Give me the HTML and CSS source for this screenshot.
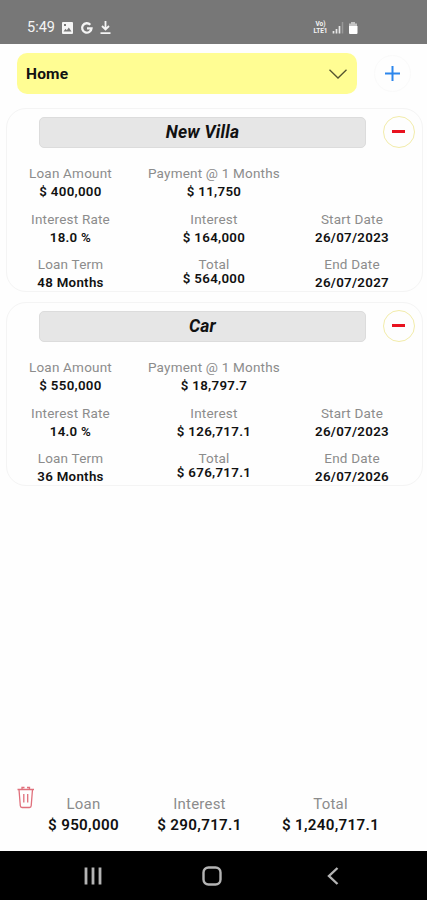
FILE: index.html
```html
<!DOCTYPE html>
<html lang="en">
  <head>
    <meta charset="UTF-8" />
    <meta name="viewport" content="width=device-width, initial-scale=1.0" />
    <title>Loans</title>
    <link rel="stylesheet" href="styles.css">
  </head>
  <body>
    <div class="status-bar">
      <span class="time">5:49</span>
      <svg class="status-left" width="52" height="14" viewBox="0 0 52 14">
        <path fill="#f4f4f4" fill-rule="evenodd" d="M2 1h9a1 1 0 0 1 1 1v10a1 1 0 0 1-1 1H2a1 1 0 0 1-1-1V2a1 1 0 0 1 1-1zM2.500 10.500h8l-2.700-4-2 2.700-1.300-1.500zM3 3v2h2V3z" />
        <path fill="none" stroke="#f4f4f4" stroke-width="2.300" d="M29.300 3.800A4.700 4.700 0 1 0 30.500 7.300H26" />
        <path fill="none" stroke="#f4f4f4" stroke-width="1.800" d="M44.500 0v8M41 5l3.500 3.500L48 5M39.500 12.200h10" />
      </svg>
      <div class="volte">
        <span>Vo)</span>
        <span>LTE1</span>
      </div>
      <svg class="status-right" width="28" height="14" viewBox="0 0 28 14">
        <path stroke="#e6e6e6" stroke-width="1.700" d="M1.500 10v2.500M4.500 8v4.500M7.500 5v7.500" />
        <path stroke="#999" stroke-width="1.500" d="M10.500 1v11.500" />
        <path fill="#c4c4c4" d="M19 1h4v1.500h2V6h-8V2.500h2z" />
        <path fill="#fff" d="M17 5h8.500v7a1 1 0 0 1-1 1H18a1 1 0 0 1-1-1z" />
      </svg>
    </div>

    <div class="toolbar">
      <div class="select">
        <span>Home</span>
        <svg width="18" height="10" viewBox="0 0 18 10">
          <path fill="none" stroke="#55552f" stroke-width="1.300" d="M.5.700 9 9 17.500.700" />
        </svg>
      </div>
      <button class="add" aria-label="Add loan">
        <svg width="15" height="15" viewBox="0 0 15 15">
          <path stroke="#2c86ec" stroke-width="2" d="M7.500 0v15M0 7.500h15" />
        </svg>
      </button>
    </div>

    <div class="card">
      <div class="card-head">
        <h2>New Villa</h2>
        <button class="remove" aria-label="Remove loan"></button>
      </div>
      <div class="details">
        <div><label>Loan Amount</label><b>$ 400,000</b></div>
        <div><label>Payment @ 1 Months</label><b>$ 11,750</b></div>
        <div></div>
        <div><label>Interest Rate</label><b>18.0 %</b></div>
        <div><label>Interest</label><b>$ 164,000</b></div>
        <div><label>Start Date</label><b>26/07/2023</b></div>
        <div><label>Loan Term</label><b>48 Months</b></div>
        <div class="total"><label>Total</label><b>$ 564,000</b></div>
        <div><label>End Date</label><b>26/07/2027</b></div>
      </div>
    </div>

    <div class="card">
      <div class="card-head">
        <h2>Car</h2>
        <button class="remove" aria-label="Remove loan"></button>
      </div>
      <div class="details">
        <div><label>Loan Amount</label><b>$ 550,000</b></div>
        <div><label>Payment @ 1 Months</label><b>$ 18,797.7</b></div>
        <div></div>
        <div><label>Interest Rate</label><b>14.0 %</b></div>
        <div><label>Interest</label><b>$ 126,717.1</b></div>
        <div><label>Start Date</label><b>26/07/2023</b></div>
        <div><label>Loan Term</label><b>36 Months</b></div>
        <div class="total"><label>Total</label><b>$ 676,717.1</b></div>
        <div><label>End Date</label><b>26/07/2026</b></div>
      </div>
    </div>

    <div class="summary">
      <svg class="trash" width="18" height="23" viewBox="0 0 18 23">
        <g fill="none" stroke="#e0707c" stroke-width="1.300">
          <path d="M.5 3.500h16.500M5 3.500V1.500h2.500M12.500 3.500V1.500H10M2 3.500l1.300 16.300q.1 1.700 1.700 1.700h7.500q1.600 0 1.700-1.700l1.300-16.300" />
          <path d="M6.800 8v8.500M10.700 8v8.500" />
        </g>
      </svg>
      <div><label>Loan</label><b>$ 950,000</b></div>
      <div><label>Interest</label><b>$ 290,717.1</b></div>
      <div><label>Total</label><b>$ 1,240,717.1</b></div>
    </div>

    <div class="nav-bar">
      <svg width="18" height="18" viewBox="0 0 18 18">
        <path stroke="#b4b4b4" stroke-width="2.800" d="M2 .5v17M9 .5v17M16 .5v17" />
      </svg>
      <svg width="20" height="20" viewBox="0 0 20 20">
        <rect x="1.500" y="1.500" width="17" height="17" rx="5" fill="none" stroke="#b4b4b4" stroke-width="2.400" />
      </svg>
      <svg width="12" height="18" viewBox="0 0 12 18">
        <path fill="none" stroke="#b4b4b4" stroke-width="2.400" d="M10.500 1 2 9l8.500 8" />
      </svg>
    </div>
  </body>
</html>
```
FILE: styles.css
```css
* {
  box-sizing: border-box;
  margin: 0;
  padding: 0;
}

body {
  font-family: Roboto, sans-serif;
  background: #fefefe;
  color: #111;
  height: 900px;
  display: flex;
  flex-direction: column;
  overflow: hidden;
}

button {
  border: none;
  background: none;
}

svg {
  display: block;
  flex: none;
}

.status-bar {
  height: 44px;
  background: #777;
  color: #f4f4f4;
  display: flex;
  align-items: center;
  padding: 11px 0 0 27px;
}

.time {
  width: 34px;
  font-size: 14.5px;
}

.volte {
  margin-left: 199px;
  width: 17px;
  font-size: 6.5px;
  font-weight: bold;
  line-height: 7px;
  text-align: center;
}

.volte span {
  display: block;
}

.status-right {
  margin-left: 3px;
}

.toolbar {
  display: flex;
  align-items: center;
  height: 41px;
  margin: 9px 0 14px 17px;
}

.select {
  width: 340px;
  height: 41px;
  border-radius: 10px;
  background: #fffd93;
  display: flex;
  align-items: center;
  justify-content: space-between;
  padding: 0 10px 0 9px;
  font-size: 15.5px;
  font-weight: bold;
  letter-spacing: 0.2px;
}

.add {
  width: 37px;
  height: 37px;
  margin-left: 17px;
  border: 1px solid #fafafa;
  border-radius: 50%;
  display: flex;
  align-items: center;
  justify-content: center;
}

.card {
  width: 417px;
  height: 184px;
  margin: 0 0 10px 6px;
  border: 1px solid #f4f4f4;
  border-radius: 20px;
}

.card-head {
  display: flex;
  align-items: center;
  height: 32px;
  margin: 7px 0 16px 32px;
}

.card-head h2 {
  width: 327px;
  height: 31px;
  border: 1px solid #dcdcdc;
  border-radius: 5px;
  background: #e6e6e6;
  font-size: 17.5px;
  font-style: italic;
  line-height: 29px;
  letter-spacing: 0.2px;
  text-align: center;
}

.remove {
  width: 32px;
  height: 32px;
  margin-left: 17px;
  border: 1px solid #f2ecaa;
  border-radius: 50%;
  display: flex;
  align-items: center;
  justify-content: center;
}

.remove::before {
  content: "";
  width: 13px;
  height: 3px;
  margin: 0 1px 1px 0;
  background: #e8121f;
}

.details {
  display: grid;
  grid-template-columns: 127px 160px 116px;
  grid-auto-rows: 45.5px;
  text-align: center;
}

label,
b {
  display: block;
  white-space: nowrap;
}

.details label {
  height: 18px;
  font-size: 13.5px;
  line-height: 18px;
  letter-spacing: 0.2px;
  color: #8c8c8c;
}

.details b {
  margin-top: 1px;
  font-size: 13.3px;
  font-weight: 600;
  line-height: 18px;
  letter-spacing: 0.3px;
}

.details .total b {
  margin-top: -3px;
}

.summary {
  display: grid;
  grid-template-columns: 17px 99px 133px 129px;
  margin: auto 0 15px 17px;
  text-align: center;
}

.summary label {
  padding-top: 8px;
  font-size: 15px;
  line-height: 20px;
  letter-spacing: 0.2px;
  color: #8c8c8c;
}

.summary b {
  font-size: 15.2px;
  font-weight: 600;
  line-height: 22px;
  letter-spacing: 0.3px;
}

.nav-bar {
  height: 49px;
  background: #000;
  display: flex;
  align-items: center;
  padding-left: 84px;
}

.nav-bar svg:nth-child(2) {
  margin: 0 105px 0 100px;
}
```
